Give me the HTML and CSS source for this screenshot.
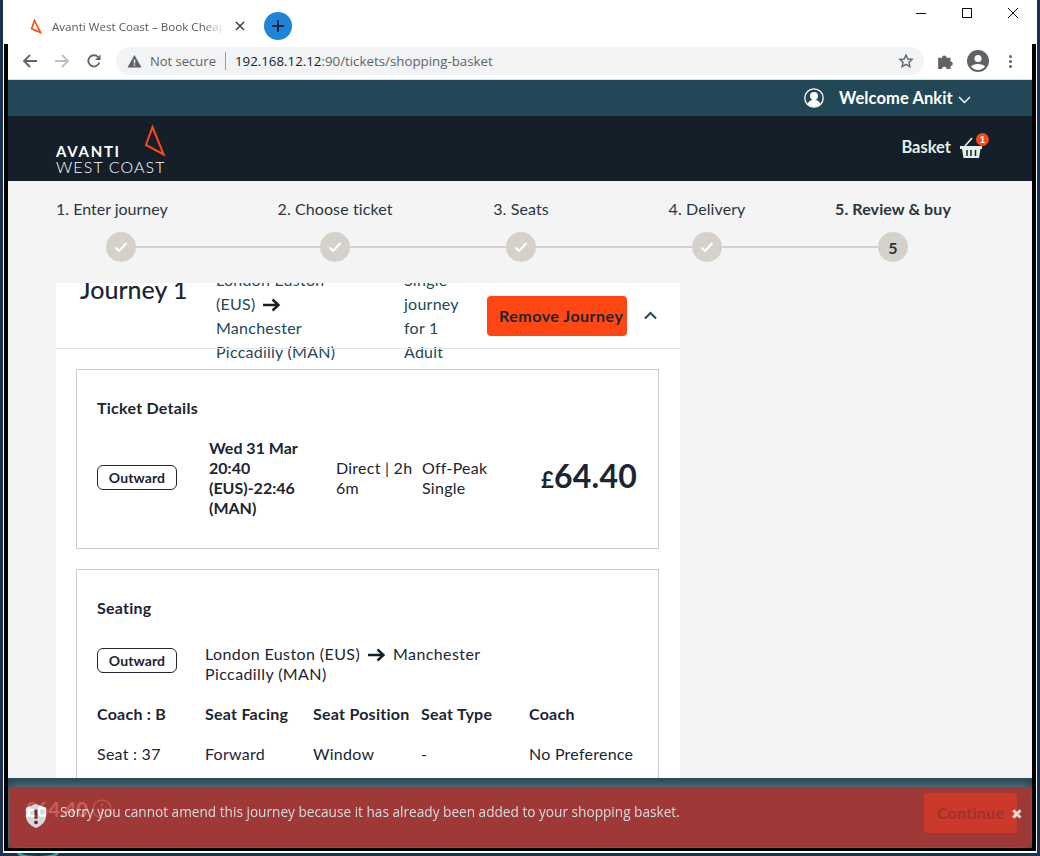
FILE: index.html
```html
<!DOCTYPE html>
<html lang="en">
  <head>
    <meta charset="UTF-8" />
    <title>Avanti West Coast – Book Cheap Train Tickets</title>
    <link rel="stylesheet" href="styles.css">
  </head>

  <body>
    <div class="window">
      <!-- browser chrome -->
      <div class="tabstrip">
        <div class="tab">
          <svg class="tab-icon" width="12" height="15" viewBox="0 0 12 15"><path d="M4.5 1.5 10.6 13.6 1.6 9.8Z" fill="none" stroke="#ff4713" stroke-width="1.6"/></svg>
          <span class="tab-title">Avanti West Coast – Book Cheap Train Tickets</span>
          <svg class="tab-close" width="10" height="10" viewBox="0 0 10 10"><path d="M1 1 9 9M9 1 1 9" stroke="#444" stroke-width="1.6"/></svg>
        </div>
        <div class="newtab">
          <svg width="14" height="14" viewBox="0 0 14 14"><path d="M7 1V13M1 7H13" stroke="#1c2a38" stroke-width="2"/></svg>
        </div>
        <div class="winctl">
          <svg width="12" height="12" viewBox="0 0 12 12"><path d="M1 6.5H11" stroke="#111" stroke-width="1"/></svg>
          <svg width="12" height="12" viewBox="0 0 12 12"><rect x="1.5" y="1.5" width="9" height="9" fill="none" stroke="#111"/></svg>
          <svg width="12" height="12" viewBox="0 0 12 12"><path d="M1 1 11 11M11 1 1 11" stroke="#111" stroke-width="1"/></svg>
        </div>
      </div>
      <div class="frame">
        <div class="toolbar">
          <svg class="tb-icon" width="16" height="16" viewBox="0 0 16 16"><path d="M15 8H2M8 2 2 8l6 6" fill="none" stroke="#5f6368" stroke-width="1.8"/></svg>
          <svg class="tb-icon" width="16" height="16" viewBox="0 0 16 16"><path d="M1 8H14M8 2l6 6-6 6" fill="none" stroke="#bcbfc3" stroke-width="1.8"/></svg>
          <svg class="tb-icon" width="16" height="16" viewBox="0 0 16 16"><path d="M13.3 9.5A5.6 5.6 0 1 1 12 4" fill="none" stroke="#5f6368" stroke-width="1.8"/><path d="M14.5 1.5V7H9Z" fill="#5f6368"/></svg>
          <div class="omnibox">
            <svg width="15" height="14" viewBox="0 0 15 14"><path d="M7.5 1 14.5 13.5H.5Z" fill="#5f6368"/><path d="M7.5 5.5V9.5M7.5 10.5V12" stroke="#f1f3f4" stroke-width="1.4"/></svg>
            <span class="insecure">Not secure</span>
            <span class="url"><b>192.168.12.12</b>:90/tickets/shopping-basket</span>
            <svg class="star" width="16" height="16" viewBox="0 0 16 16"><path d="M8 2l1.8 4 4.3.4-3.2 2.9 1 4.2L8 11.3 4.100 13.500l1-4.200L1.900 6.400 6.200 6Z" fill="none" stroke="#5f6368" stroke-width="1.400"/></svg>
          </div>
          <svg class="puzzle" width="18" height="18" viewBox="0 0 16 16"><path d="M1 5h3.500a2 2 0 1 1 4 0H12v3.500a2 2 0 1 1 0 4V15H8.500a2 2 0 1 0-4 0H1Z" fill="#5f6368"/></svg>
          <svg class="avatar" width="22" height="22" viewBox="0 0 22 22"><circle cx="11" cy="11" r="11" fill="#5f6368"/><circle cx="11" cy="8.500" r="3.500" fill="#fff"/><path d="M4 16.500c2-3.500 12-3.500 14 0a8.700 8.700 0 0 1-14 0Z" fill="#fff"/></svg>
          <div class="dots"><i></i><i></i><i></i></div>
        </div>

        <!-- page -->
        <div class="page">
          <div class="userbar">
            <svg width="20" height="20" viewBox="0 0 20 20"><circle cx="10" cy="10" r="9.200" fill="#224858" stroke="#fff" stroke-width="1.300"/><circle cx="10" cy="8" r="4" fill="#fff"/><path d="M3.500 16c1.500-3.500 4-3.500 5-4.500h3c1 1 3.500 1 5 4.500a8.500 8.500 0 0 1-13 0Z" fill="#fff"/></svg>
            <span class="welcome">Welcome Ankit</span>
            <svg class="welcome-caret" width="13" height="8" viewBox="0 0 13 8"><path d="M1 1l5.500 5.500L12 1" fill="none" stroke="#fff" stroke-width="1.400"/></svg>
          </div>
          <div class="brandbar">
            <div class="logo">
              <svg class="logo-mark" width="23" height="33" viewBox="0 0 23 33"><path d="M8.500 3 19.700 30.500 2 21Z" fill="none" stroke="#ff4713" stroke-width="2"/></svg>
              <div class="logo-top">AVANTI</div>
              <div class="logo-bot">WEST COAST</div>
            </div>
            <div class="basket">
              <span>Basket</span>
              <div class="basket-icon">
                <svg width="24" height="22" viewBox="0 0 24 22"><path d="M0 9H22V12H20.500L19 21H3.500L2 12H0Z" fill="#e2f0e6"/><path d="M5 9 12 1" stroke="#e2f0e6" stroke-width="1.600"/><path d="M7 13V19M11 13V19M15.500 13V19" stroke="#141f2a" stroke-width="1.500"/></svg>
                <span class="badge">1</span>
              </div>
            </div>
          </div>

          <div class="content">
            <div class="steps">
              <div class="steps-line"></div>
              <div class="step first"><p>1. Enter journey</p><div class="dot"><svg width="14" height="12" viewBox="0 0 14 12"><path d="M1.500 6.500 5 10l7.500-8" fill="none" stroke="#fff" stroke-width="2"/></svg></div></div>
              <div class="step"><p>2. Choose ticket</p><div class="dot"><svg width="14" height="12" viewBox="0 0 14 12"><path d="M1.500 6.500 5 10l7.500-8" fill="none" stroke="#fff" stroke-width="2"/></svg></div></div>
              <div class="step"><p>3. Seats</p><div class="dot"><svg width="14" height="12" viewBox="0 0 14 12"><path d="M1.500 6.500 5 10l7.500-8" fill="none" stroke="#fff" stroke-width="2"/></svg></div></div>
              <div class="step"><p>4. Delivery</p><div class="dot"><svg width="14" height="12" viewBox="0 0 14 12"><path d="M1.500 6.500 5 10l7.500-8" fill="none" stroke="#fff" stroke-width="2"/></svg></div></div>
              <div class="step current"><p>5. Review &amp; buy</p><div class="dot">5</div></div>
            </div>

            <div class="journey">
              <div class="journey-head">
                <h2>Journey 1</h2>
                <div class="journey-route">London Euston (EUS) <svg class="arrow" width="18" height="14" viewBox="0 0 18 14"><path d="M0 7H15M9.500 1.500 15.500 7l-6 5.500" fill="none" stroke="#141f2a" stroke-width="2.400"/></svg> Manchester Piccadilly (MAN)</div>
                <div class="journey-type">Single journey for 1 Adult</div>
                <button class="remove">Remove Journey</button>
                <svg class="chevron" width="13" height="9" viewBox="0 0 13 9"><path d="M1 7.500 6.500 2 12 7.500" fill="none" stroke="#224858" stroke-width="2"/></svg>
              </div>
              <div class="journey-body">
                <div class="box">
                  <h3>Ticket Details</h3>
                  <div class="ticket-row">
                    <span class="pill">Outward</span>
                    <div class="ticket-time">Wed 31 Mar 20:40 (EUS)-22:46 (MAN)</div>
                    <div>Direct | 2h 6m</div>
                    <div>Off-Peak Single</div>
                    <div class="price"><small>£</small>64.40</div>
                  </div>
                </div>
                <div class="box">
                  <h3>Seating</h3>
                  <div class="seat-route">
                    <span class="pill">Outward</span>
                    <div>London Euston (EUS) <svg class="arrow" width="18" height="14" viewBox="0 0 18 14"><path d="M0 7H15M9.500 1.500 15.500 7l-6 5.500" fill="none" stroke="#141f2a" stroke-width="2.400"/></svg> Manchester Piccadilly (MAN)</div>
                  </div>
                  <div class="seat-grid">
                    <b>Coach : B</b><b>Seat Facing</b><b>Seat Position</b><b>Seat Type</b><b>Coach</b>
                    <span>Seat : 37</span><span>Forward</span><span>Window</span><span>-</span><span>No Preference</span>
                  </div>
                </div>
              </div>
            </div>
          </div>

          <div class="footbar">
            <div class="total">£64.40
              <svg width="20" height="20" viewBox="0 0 20 20"><circle cx="10" cy="10" r="9" fill="none" stroke="#fff" stroke-width="1.200"/><path d="M10 5V7M10 9V15" stroke="#fff" stroke-width="1.600"/></svg>
            </div>
            <button class="continue">Continue</button>
          </div>

          <!-- error toast sits over the footer bar -->
          <div class="toast">
            <svg class="toast-icon" width="22" height="26" viewBox="0 0 24 28"><path d="M12 1 23 5V14C23 21 17 25 12 27 7 25 1 21 1 14V5Z" fill="#fff"/><path d="M12 7V17" stroke="#8c1f1f" stroke-width="3.400"/><circle cx="12" cy="21" r="2" fill="#8c1f1f"/></svg>
            <span class="toast-msg">Sorry you cannot amend this journey because it has already been added to your shopping basket.</span>
            <span class="toast-close">✖</span>
          </div>
        </div>
      </div>
    </div>
    <svg class="desk-icon" width="44" height="6" viewBox="0 0 44 6"><path d="M2 0C8 6 36 6 42 0" fill="none" stroke="#2aa3a8" stroke-width="3"/></svg>
  </body>
</html>
```

FILE: styles.css
```css
* {
  margin: 0;
  padding: 0;
  box-sizing: border-box;
}

html,
body {
  height: 100%;
  overflow: hidden;
}

body {
  background: #1b3050;
  font-family: "Lato", "Liberation Sans", sans-serif;
  font-size: 16px;
  color: #1c2530;
  padding: 0 3px 3px;
}

.window {
  height: 853px;
  background: #fff;
  padding: 0 1px 2px;
  display: flex;
  flex-direction: column;
}

/* browser chrome */
.tabstrip {
  height: 44px;
  flex: none;
  display: flex;
  align-items: center;
  padding-left: 26px;
  font-family: "Open Sans", sans-serif;
}

.tab {
  width: 220px;
  display: flex;
  align-items: center;
  margin-top: 8px;
}

.tab-icon {
  flex: none;
  margin-right: 10px;
}

.tab-title {
  width: 172px;
  overflow: hidden;
  white-space: nowrap;
  font-size: 11.600px;
  color: #5a5a5a;
  -webkit-mask-image: linear-gradient(90deg, #000 88%, transparent);
  mask-image: linear-gradient(90deg, #000 88%, transparent);
}

.tab-close {
  flex: none;
  margin-left: 11px;
}

.newtab {
  width: 28px;
  height: 28px;
  border-radius: 50%;
  background: #1e84d8;
  display: flex;
  align-items: center;
  justify-content: center;
  margin-left: 14px;
  margin-top: 8px;
}

.winctl {
  margin-left: auto;
  margin-bottom: 19px;
  padding-right: 17px;
  display: flex;
  gap: 34px;
}

.frame {
  flex: 1;
  min-height: 0;
  border: 4px solid #000;
  border-top: 0;
  border-bottom-width: 3px;
  display: flex;
  flex-direction: column;
}

.toolbar {
  height: 36px;
  flex: none;
  display: flex;
  align-items: center;
  border-bottom: 1px solid #dcdcdc;
  padding-left: 14px;
  padding-bottom: 1px;
}

.tb-icon {
  margin-right: 16px;
}

.omnibox {
  width: 808px;
  height: 28px;
  margin-left: -2px;
  border-radius: 14px;
  background: #f1f3f4;
  display: flex;
  align-items: center;
  padding-left: 11px;
  font-family: "Open Sans", sans-serif;
  font-size: 13px;
  color: #5f6368;
  white-space: nowrap;
}

.insecure {
  margin-left: 8px;
  padding-right: 9px;
  border-right: 1px solid #9a9ea2;
  line-height: 18px;
}

.url {
  margin-left: 9px;
  font-size: 13.300px;
}

.url b {
  font-weight: 400;
  color: #202124;
}

.star {
  margin-left: auto;
  margin-right: 10px;
}

.puzzle {
  margin-left: 13px;
}

.avatar {
  margin-left: 12px;
}

.dots {
  margin-left: 20px;
  display: flex;
  flex-direction: column;
  gap: 2px;
}

.dots i {
  width: 3px;
  height: 3px;
  border-radius: 50%;
  background: #5f6368;
}

/* page */
.page {
  position: relative;
  flex: 1;
  min-height: 0;
  overflow: hidden;
  background: #f4f4f4;
}

.userbar {
  height: 36px;
  background: #224858;
  display: flex;
  align-items: center;
  padding-left: 796px;
  color: #fff;
}

.welcome {
  margin-left: 15px;
  margin-right: 5px;
  font-size: 16.500px;
  font-weight: 700;
  letter-spacing: 0.100px;
}

.welcome-caret {
  margin-top: 3px;
}

.brandbar {
  height: 65px;
  background: #141f2a;
  display: flex;
  justify-content: space-between;
  align-items: center;
  padding: 0 48px;
}

.logo {
  position: relative;
  width: 110px;
  padding-top: 25px;
  padding-bottom: 4px;
  color: #fff;
  white-space: nowrap;
}

.logo-mark {
  position: absolute;
  right: -1px;
  top: 6px;
}

.logo-top {
  font-size: 15px;
  font-weight: 700;
  letter-spacing: 1.700px;
  line-height: 16px;
}

.logo-bot {
  font-size: 16px;
  font-weight: 300;
  letter-spacing: 1.100px;
  line-height: 16px;
}

.basket {
  display: flex;
  align-items: center;
  gap: 9px;
  margin-bottom: 4px;
  font-size: 16.500px;
  font-weight: 700;
  color: #e2f0e6;
}

.basket-icon {
  position: relative;
  height: 22px;
  margin-top: 3px;
}

.badge {
  position: absolute;
  top: -4px;
  right: -5px;
  width: 13px;
  height: 13px;
  border-radius: 50%;
  background: #ff4713;
  color: #fff;
  font-size: 10px;
  line-height: 13px;
  text-align: center;
}

.content {
  padding: 0 48px;
}

.steps {
  position: relative;
  display: grid;
  grid-template-columns: repeat(5, 186px);
  padding-top: 17px;
  height: 102px;
}

.steps-line {
  position: absolute;
  left: 65px;
  width: 771px;
  top: 65px;
  height: 2px;
  background: #d5d0ca;
}

.step {
  position: relative;
  display: flex;
  flex-direction: column;
  align-items: center;
  gap: 12px;
  color: #2a3440;
  letter-spacing: 0.100px;
}

.step p {
  line-height: 22px;
}

.step.first {
  align-items: flex-start;
  letter-spacing: 0;
}

.step.first .dot {
  margin-left: 50px;
}

.dot {
  width: 30px;
  height: 30px;
  border-radius: 50%;
  background: #d5d0ca;
  display: flex;
  align-items: center;
  justify-content: center;
}

.current {
  font-weight: 700;
}

.journey {
  width: 624px;
  height: 495px;
  overflow: hidden;
  background: #fff;
  letter-spacing: 0.250px;
}

.journey-head {
  position: relative;
  height: 66px;
  display: flex;
  align-items: center;
  color: #224858;
  line-height: 24px;
}

/* the rule is drawn over the text that overflows the header */
.journey-head::after {
  content: "";
  position: absolute;
  left: 0;
  right: 0;
  bottom: 0;
  height: 1px;
  background: #e4e4e4;
}

.journey-head h2 {
  width: 136px;
  flex: none;
  margin-left: 24px;
  margin-top: -1px;
  align-self: flex-start;
  font-size: 25px;
  font-weight: 500;
  line-height: 14px;
  color: #1c2530;
  letter-spacing: 0;
}

.journey-route {
  width: 135px;
  flex: none;
  margin-right: 53px;
}

.journey-type {
  width: 64px;
  flex: none;
  margin-right: 19px;
}

.arrow {
  vertical-align: -2px;
  margin: 0 3px;
}

.remove {
  width: 140px;
  height: 40px;
  flex: none;
  border: 0;
  border-radius: 4px;
  background: #ff4713;
  padding: 0 0 2px 12px;
  text-align: left;
  font: 700 16px "Lato", sans-serif;
  letter-spacing: 0.500px;
  color: #1c2530;
}

.chevron {
  margin-left: 17px;
  margin-bottom: 2px;
}

.journey-body {
  padding: 20px 21px 20px 20px;
  display: flex;
  flex-direction: column;
  gap: 20px;
}

.box {
  border: 1px solid #ccc;
  padding: 27px 20px 0;
  height: 180px;
  flex: none;
}

.box + .box {
  height: 260px;
}

h3 {
  font-size: 16px;
  font-weight: 700;
  line-height: 22px;
}

.ticket-row {
  display: grid;
  grid-template-columns: 112px 127px 86px 90px 1fr;
  align-items: center;
  margin-top: 19px;
  line-height: 20px;
}

.ticket-row > div:nth-child(3),
.ticket-row > div:nth-child(4) {
  padding-right: 6px;
}

.ticket-time {
  font-weight: 700;
  padding-right: 14px;
  letter-spacing: 0;
}

.pill {
  width: 80px;
  height: 25px;
  border: 1px solid #1c2530;
  border-radius: 6px;
  font-size: 14px;
  font-weight: 700;
  letter-spacing: 0.100px;
  line-height: 23px;
  text-align: center;
}

.ticket-row .pill {
  margin-bottom: 2px;
}

.price {
  padding-right: 1px;
  font-size: 32px;
  font-weight: 700;
  line-height: 40px;
  text-align: right;
  white-space: nowrap;
}

.price small {
  font-size: 22px;
}

.seat-route {
  display: grid;
  grid-template-columns: 108px 290px;
  align-items: start;
  margin-top: 25px;
  line-height: 20px;
  letter-spacing: 0.400px;
}

.seat-route .pill {
  margin-top: 4px;
}

.seat-grid {
  display: grid;
  grid-template-columns: repeat(5, 108px);
  row-gap: 18px;
  margin-top: 19px;
  line-height: 22px;
  white-space: nowrap;
}

/* footer + toast */
.footbar {
  position: absolute;
  left: 0;
  right: 0;
  bottom: 0;
  height: 70px;
  background: #224858;
  display: flex;
  align-items: center;
  justify-content: space-between;
  padding: 0 15px 0 17px;
}

.total {
  display: flex;
  align-items: center;
  gap: 4px;
  margin-bottom: 8px;
  font-size: 20px;
  font-weight: 700;
  color: #fff;
}

.continue {
  width: 93px;
  height: 40px;
  border: 0;
  border-radius: 4px;
  background: #ff4713;
  padding-bottom: 2px;
  font: 700 16px "Lato", sans-serif;
  letter-spacing: 0.300px;
  color: #1c2530;
}

.toast {
  position: absolute;
  left: 1px;
  right: 1px;
  bottom: 1px;
  height: 60px;
  display: flex;
  align-items: center;
  padding: 0 8px 8px 16px;
  border-radius: 3px;
  background: #bd362f;
  box-shadow: 0 0 12px #999;
  opacity: 0.8;
  color: #fff;
}

.toast-icon {
  flex: none;
  margin-top: 6px;
}

.toast-msg {
  margin-left: 13px;
  margin-bottom: 4px;
  font-family: "Open Sans", sans-serif;
  font-size: 13.650px;
}

.toast-close {
  margin-left: auto;
  font-size: 14px;
}

.desk-icon {
  position: absolute;
  left: 16px;
  top: 853px;
}
```
